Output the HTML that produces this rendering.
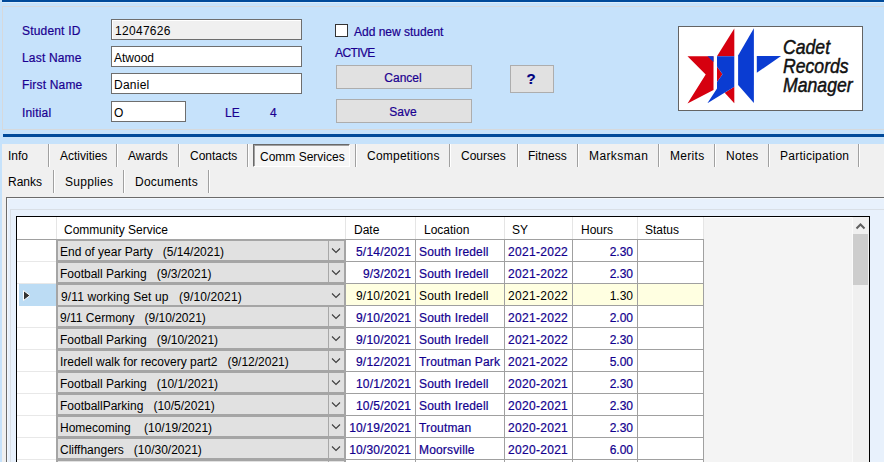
<!DOCTYPE html>
<html><head><meta charset="utf-8"><style>
html,body{margin:0;padding:0;}
body{width:884px;height:462px;overflow:hidden;position:relative;background:#c6e2fb;font-family:"Liberation Sans",sans-serif;}
body>div{position:absolute;}
.t{font-size:12px;line-height:14px;white-space:pre;}
.b{-webkit-text-stroke:0.2px;}
.logo{font-family:"Liberation Sans",sans-serif;font-style:italic;font-size:21px;line-height:21px;color:#111;transform-origin:0 0;transform:scaleX(0.84);-webkit-text-stroke:0.5px #111;white-space:pre;}
</style></head><body>
<div style="left:2px;top:0px;width:882px;height:2px;background:#004a9a;"></div>
<div style="left:2px;top:2px;width:882px;height:1px;background:#dcedfc;"></div>
<div style="left:2px;top:6px;width:900px;height:124px;background:transparent;border:1px solid #d6d9dc;box-sizing:border-box;"></div>
<div style="left:3px;top:134px;width:881px;height:3px;background:#004a9a;"></div>
<div class="t b" style="left:22px;top:24px;color:#1a0090;letter-spacing:0.18px">Student ID</div>
<div class="t b" style="left:22px;top:51px;color:#1a0090;letter-spacing:0.18px">Last Name</div>
<div class="t b" style="left:22px;top:78px;color:#1a0090;letter-spacing:0.18px">First Name</div>
<div class="t b" style="left:22px;top:106px;color:#1a0090;letter-spacing:0.18px">Initial</div>
<div class="t b" style="left:225px;top:106px;color:#1a0090;">LE</div>
<div class="t b" style="left:270px;top:106px;color:#1a0090;">4</div>
<div style="left:111px;top:19px;width:191px;height:21px;background:#f0f0f0;border:1px solid #6e6e6e;box-sizing:border-box;box-shadow:inset 1px 1px 0 #fff"></div>
<div class="t" style="left:115px;top:24px;color:#000;letter-spacing:0.3px">12047626</div>
<div style="left:111px;top:46px;width:191px;height:21px;background:#fff;border:1px solid #6e6e6e;box-sizing:border-box;box-shadow:inset 1px 1px 0 #fff"></div>
<div class="t" style="left:114px;top:51px;color:#000;letter-spacing:0px">Atwood</div>
<div style="left:111px;top:73px;width:191px;height:21px;background:#fff;border:1px solid #6e6e6e;box-sizing:border-box;box-shadow:inset 1px 1px 0 #fff"></div>
<div class="t" style="left:114px;top:78px;color:#000;letter-spacing:0.25px">Daniel</div>
<div style="left:111px;top:101px;width:75px;height:21px;background:#fff;border:1px solid #6e6e6e;box-sizing:border-box;box-shadow:inset 1px 1px 0 #fff"></div>
<div class="t" style="left:114px;top:106px;color:#000;letter-spacing:0px">O</div>
<div style="left:335px;top:24px;width:13px;height:13px;background:#fff;border:1px solid #333;box-sizing:border-box;"></div>
<div class="t b" style="left:354px;top:25px;color:#1a0090;">Add new student</div>
<div class="t b" style="left:335px;top:46px;color:#1a0090;letter-spacing:-0.6px">ACTIVE</div>
<div style="left:336px;top:65px;width:136px;height:24px;background:#e1e1e1;border:1px solid #adadad;box-sizing:border-box;"></div>
<div class="t b" style="left:335px;width:136px;text-align:center;top:71px;color:#1a0090;">Cancel</div>
<div style="left:336px;top:99px;width:136px;height:24px;background:#e1e1e1;border:1px solid #adadad;box-sizing:border-box;"></div>
<div class="t b" style="left:335px;width:136px;text-align:center;top:105px;color:#1a0090;">Save</div>
<div style="left:510px;top:65px;width:44px;height:28px;background:#e1e1e1;border:1px solid #adadad;box-sizing:border-box;"></div>
<div class="t b" style="left:509px;width:44px;text-align:center;top:73px;color:#1a0090;font-weight:bold;font-size:15px;color:#000080;line-height:14px;left:509px;margin-top:-1px">?</div>
<div style="left:678px;top:26px;width:185px;height:85px;background:#fff;border:1px solid #646464;box-sizing:border-box;"></div>
<svg style="position:absolute;left:0;top:0" width="884" height="140" viewBox="0 0 884 140">
<g fill="#d6000f">
<polygon points="687.5,56.3 713.5,56.3 713.5,90 687.5,103.5 705.7,74.6"/>
<polygon points="717,56.3 734.3,28.6 734.3,56.3"/>
<polygon points="717,66.5 722.5,74.3 717,82"/>
<polygon points="724.7,92.8 734.3,86.7 734.3,103.2"/>
</g>
<g fill="#0a3cd2">
<polygon points="707.5,56.3 713.5,56.3 713.5,62"/>
<polygon points="717,56.3 734.3,56.3 734.3,86.7 707.4,103.2 717,88.5 717,82 722.5,74.3 717,66.5"/>
<polygon points="753.9,28.3 753.9,103 738.1,85 738.1,55.6"/>
<polygon points="756.8,56.1 781.1,56.1 756.8,72.7"/>
</g>
</svg>
<div class="logo" style="left:783px;top:36px">Cadet</div>
<div class="logo" style="left:783px;top:55px">Records</div>
<div class="logo" style="left:783px;top:74px">Manager</div>
<div style="left:2px;top:144px;width:882px;height:318px;background:#f0f0f0;"></div>
<div style="left:48px;top:144px;width:1px;height:23px;background:#a0a0a0;"></div>
<div style="left:49px;top:144px;width:1px;height:23px;background:#ffffff;"></div>
<div style="left:116px;top:144px;width:1px;height:23px;background:#a0a0a0;"></div>
<div style="left:117px;top:144px;width:1px;height:23px;background:#ffffff;"></div>
<div style="left:178px;top:144px;width:1px;height:23px;background:#a0a0a0;"></div>
<div style="left:179px;top:144px;width:1px;height:23px;background:#ffffff;"></div>
<div style="left:247px;top:144px;width:1px;height:23px;background:#a0a0a0;"></div>
<div style="left:248px;top:144px;width:1px;height:23px;background:#ffffff;"></div>
<div style="left:355px;top:144px;width:1px;height:23px;background:#a0a0a0;"></div>
<div style="left:356px;top:144px;width:1px;height:23px;background:#ffffff;"></div>
<div style="left:449px;top:144px;width:1px;height:23px;background:#a0a0a0;"></div>
<div style="left:450px;top:144px;width:1px;height:23px;background:#ffffff;"></div>
<div style="left:517px;top:144px;width:1px;height:23px;background:#a0a0a0;"></div>
<div style="left:518px;top:144px;width:1px;height:23px;background:#ffffff;"></div>
<div style="left:577px;top:144px;width:1px;height:23px;background:#a0a0a0;"></div>
<div style="left:578px;top:144px;width:1px;height:23px;background:#ffffff;"></div>
<div style="left:658px;top:144px;width:1px;height:23px;background:#a0a0a0;"></div>
<div style="left:659px;top:144px;width:1px;height:23px;background:#ffffff;"></div>
<div style="left:714px;top:144px;width:1px;height:23px;background:#a0a0a0;"></div>
<div style="left:715px;top:144px;width:1px;height:23px;background:#ffffff;"></div>
<div style="left:768px;top:144px;width:1px;height:23px;background:#a0a0a0;"></div>
<div style="left:769px;top:144px;width:1px;height:23px;background:#ffffff;"></div>
<div style="left:858px;top:144px;width:1px;height:23px;background:#a0a0a0;"></div>
<div style="left:859px;top:144px;width:1px;height:23px;background:#ffffff;"></div>
<div style="left:53px;top:170px;width:1px;height:23px;background:#a0a0a0;"></div>
<div style="left:54px;top:170px;width:1px;height:23px;background:#ffffff;"></div>
<div style="left:123px;top:170px;width:1px;height:23px;background:#a0a0a0;"></div>
<div style="left:124px;top:170px;width:1px;height:23px;background:#ffffff;"></div>
<div style="left:208px;top:170px;width:1px;height:23px;background:#a0a0a0;"></div>
<div style="left:209px;top:170px;width:1px;height:23px;background:#ffffff;"></div>
<div style="left:253px;top:144px;width:97px;height:23px;background:#f6f6f6;border:1px solid;border-color:#696969 #fff #fff #696969;box-sizing:border-box;box-shadow:inset 1px 1px 0 #a0a0a0"></div>
<div class="t" style="left:8px;top:149px;color:#000;letter-spacing:0px">Info</div>
<div class="t" style="left:60px;top:149px;color:#000;letter-spacing:0px">Activities</div>
<div class="t" style="left:128px;top:149px;color:#000;letter-spacing:0px">Awards</div>
<div class="t" style="left:190px;top:149px;color:#000;letter-spacing:0px">Contacts</div>
<div class="t" style="left:367px;top:149px;color:#000;letter-spacing:0.22px">Competitions</div>
<div class="t" style="left:461px;top:149px;color:#000;letter-spacing:0px">Courses</div>
<div class="t" style="left:528px;top:149px;color:#000;letter-spacing:0px">Fitness</div>
<div class="t" style="left:589px;top:149px;color:#000;letter-spacing:0.4px">Marksman</div>
<div class="t" style="left:670px;top:149px;color:#000;letter-spacing:0.3px">Merits</div>
<div class="t" style="left:726px;top:149px;color:#000;letter-spacing:0.25px">Notes</div>
<div class="t" style="left:780px;top:149px;color:#000;letter-spacing:0.25px">Participation</div>
<div class="t" style="left:260px;top:150px;color:#000;">Comm Services</div>
<div class="t" style="left:8px;top:175px;color:#000;letter-spacing:0px">Ranks</div>
<div class="t" style="left:65px;top:175px;color:#000;letter-spacing:0.28px">Supplies</div>
<div class="t" style="left:135px;top:175px;color:#000;letter-spacing:0.25px">Documents</div>
<div style="left:6px;top:197px;width:878px;height:265px;background:#e8f1fc;border-left:1px solid #6b6b6b;border-top:1px solid #6b6b6b;box-sizing:border-box;box-shadow:inset 1px 1px 0 #f4f8fd"></div>
<div style="left:10px;top:209px;width:874px;height:253px;background:transparent;border-left:1px solid #d9dfe6;border-top:1px solid #d9dfe6;box-sizing:border-box;"></div>
<div style="left:16px;top:216px;width:854px;height:246px;background:#f4f4f4;border:1px solid #000;border-bottom:none;box-sizing:border-box;"></div>
<div style="left:17px;top:217px;width:835px;height:1px;background:#fff;"></div>
<div style="left:17px;top:217px;width:686px;height:23px;background:#fff;"></div>
<div style="left:17px;top:239px;width:687px;height:1px;background:#a0a0a0;"></div>
<div style="left:56px;top:217px;width:1px;height:22px;background:#e5e5e5;"></div>
<div style="left:345px;top:217px;width:1px;height:22px;background:#e5e5e5;"></div>
<div style="left:415px;top:217px;width:1px;height:22px;background:#e5e5e5;"></div>
<div style="left:504px;top:217px;width:1px;height:22px;background:#e5e5e5;"></div>
<div style="left:572px;top:217px;width:1px;height:22px;background:#e5e5e5;"></div>
<div style="left:637px;top:217px;width:1px;height:22px;background:#e5e5e5;"></div>
<div style="left:703px;top:217px;width:1px;height:22px;background:#e5e5e5;"></div>
<div class="t" style="left:64px;top:223px;color:#000;">Community Service</div>
<div class="t" style="left:354px;top:223px;color:#000;">Date</div>
<div class="t" style="left:424px;top:223px;color:#000;">Location</div>
<div class="t" style="left:512px;top:223px;color:#000;">SY</div>
<div class="t" style="left:581px;top:223px;color:#000;">Hours</div>
<div class="t" style="left:645px;top:223px;color:#000;">Status</div>
<div style="left:17px;top:240px;width:39px;height:222px;background:#fff;"></div>
<div style="left:56px;top:239px;width:290px;height:223px;background:#a5a5a5;"></div>
<div style="left:346px;top:240px;width:358px;height:222px;background:#fff;"></div>
<div style="left:17px;top:261px;width:39px;height:1px;background:#e8e8e8;"></div>
<div style="left:58px;top:241px;width:286px;height:19px;background:#e1e1e1;"></div>
<div style="left:328px;top:241px;width:1px;height:19px;background:#a8a8a8;"></div>
<svg style="position:absolute;left:331px;top:248px" width="10" height="6" viewBox="0 0 10 6"><polyline points="1,0.5 5,4.5 9,0.5" fill="none" stroke="#3c3c3c" stroke-width="1.1"/></svg>
<div style="left:346px;top:261px;width:358px;height:1px;background:#a0a0a0;"></div>
<div class="t" style="left:60px;top:245px;color:#000;">End of year Party   (5/14/2021)</div>
<div class="t b" style="right:473px;top:245px;color:#12008e;letter-spacing:0.2px;margin-right:-0.2px">5/14/2021</div>
<div class="t b" style="left:419px;top:245px;color:#12008e;letter-spacing:0.17px">South Iredell</div>
<div class="t b" style="left:508px;top:245px;color:#12008e;letter-spacing:0.3px">2021-2022</div>
<div class="t b" style="right:251px;top:245px;color:#12008e;">2.30</div>
<div style="left:17px;top:283px;width:39px;height:1px;background:#e8e8e8;"></div>
<div style="left:58px;top:263px;width:286px;height:19px;background:#e1e1e1;"></div>
<div style="left:328px;top:263px;width:1px;height:19px;background:#a8a8a8;"></div>
<svg style="position:absolute;left:331px;top:270px" width="10" height="6" viewBox="0 0 10 6"><polyline points="1,0.5 5,4.5 9,0.5" fill="none" stroke="#3c3c3c" stroke-width="1.1"/></svg>
<div style="left:346px;top:283px;width:358px;height:1px;background:#a0a0a0;"></div>
<div class="t" style="left:60px;top:267px;color:#000;">Football Parking   (9/3/2021)</div>
<div class="t b" style="right:473px;top:267px;color:#12008e;letter-spacing:0.2px;margin-right:-0.2px">9/3/2021</div>
<div class="t b" style="left:419px;top:267px;color:#12008e;letter-spacing:0.17px">South Iredell</div>
<div class="t b" style="left:508px;top:267px;color:#12008e;letter-spacing:0.3px">2021-2022</div>
<div class="t b" style="right:251px;top:267px;color:#12008e;">2.30</div>
<div style="left:19px;top:284px;width:37px;height:22px;background:#bcdcf4;"></div>
<svg style="position:absolute;left:22px;top:290px" width="10" height="12" viewBox="0 0 10 12"><polygon points="1.5,0.5 8,5.5 1.5,10.5" fill="#333" stroke="#fff" stroke-width="1"/></svg>
<div style="left:346px;top:284px;width:357px;height:21px;background:#ffffe1;"></div>
<div style="left:58px;top:285px;width:286px;height:20px;background:#e1e1e1;"></div>
<svg style="position:absolute;left:331px;top:293px" width="10" height="6" viewBox="0 0 10 6"><polyline points="1,0.5 5,4.5 9,0.5" fill="none" stroke="#3c3c3c" stroke-width="1.1"/></svg>
<div style="left:346px;top:305px;width:358px;height:1px;background:#a0a0a0;"></div>
<div class="t" style="left:61px;top:290px;color:#000;letter-spacing:0.13px">9/11 working Set up   (9/10/2021)</div>
<div class="t" style="right:473px;top:289px;color:#000;letter-spacing:0.2px;margin-right:-0.2px">9/10/2021</div>
<div class="t" style="left:419px;top:289px;color:#000;letter-spacing:0.17px">South Iredell</div>
<div class="t" style="left:508px;top:289px;color:#000;letter-spacing:0.3px">2021-2022</div>
<div class="t" style="right:251px;top:289px;color:#000;">1.30</div>
<div style="left:17px;top:327px;width:39px;height:1px;background:#e8e8e8;"></div>
<div style="left:58px;top:307px;width:286px;height:19px;background:#e1e1e1;"></div>
<div style="left:328px;top:307px;width:1px;height:19px;background:#a8a8a8;"></div>
<svg style="position:absolute;left:331px;top:314px" width="10" height="6" viewBox="0 0 10 6"><polyline points="1,0.5 5,4.5 9,0.5" fill="none" stroke="#3c3c3c" stroke-width="1.1"/></svg>
<div style="left:346px;top:327px;width:358px;height:1px;background:#a0a0a0;"></div>
<div class="t" style="left:60px;top:311px;color:#000;">9/11 Cermony   (9/10/2021)</div>
<div class="t b" style="right:473px;top:311px;color:#12008e;letter-spacing:0.2px;margin-right:-0.2px">9/10/2021</div>
<div class="t b" style="left:419px;top:311px;color:#12008e;letter-spacing:0.17px">South Iredell</div>
<div class="t b" style="left:508px;top:311px;color:#12008e;letter-spacing:0.3px">2021-2022</div>
<div class="t b" style="right:251px;top:311px;color:#12008e;">2.00</div>
<div style="left:17px;top:349px;width:39px;height:1px;background:#e8e8e8;"></div>
<div style="left:58px;top:329px;width:286px;height:19px;background:#e1e1e1;"></div>
<div style="left:328px;top:329px;width:1px;height:19px;background:#a8a8a8;"></div>
<svg style="position:absolute;left:331px;top:336px" width="10" height="6" viewBox="0 0 10 6"><polyline points="1,0.5 5,4.5 9,0.5" fill="none" stroke="#3c3c3c" stroke-width="1.1"/></svg>
<div style="left:346px;top:349px;width:358px;height:1px;background:#a0a0a0;"></div>
<div class="t" style="left:60px;top:333px;color:#000;">Football Parking   (9/10/2021)</div>
<div class="t b" style="right:473px;top:333px;color:#12008e;letter-spacing:0.2px;margin-right:-0.2px">9/10/2021</div>
<div class="t b" style="left:419px;top:333px;color:#12008e;letter-spacing:0.17px">South Iredell</div>
<div class="t b" style="left:508px;top:333px;color:#12008e;letter-spacing:0.3px">2021-2022</div>
<div class="t b" style="right:251px;top:333px;color:#12008e;">2.30</div>
<div style="left:17px;top:371px;width:39px;height:1px;background:#e8e8e8;"></div>
<div style="left:58px;top:351px;width:286px;height:19px;background:#e1e1e1;"></div>
<div style="left:328px;top:351px;width:1px;height:19px;background:#a8a8a8;"></div>
<svg style="position:absolute;left:331px;top:358px" width="10" height="6" viewBox="0 0 10 6"><polyline points="1,0.5 5,4.5 9,0.5" fill="none" stroke="#3c3c3c" stroke-width="1.1"/></svg>
<div style="left:346px;top:371px;width:358px;height:1px;background:#a0a0a0;"></div>
<div class="t" style="left:60px;top:355px;color:#000;">Iredell walk for recovery part2   (9/12/2021)</div>
<div class="t b" style="right:473px;top:355px;color:#12008e;letter-spacing:0.2px;margin-right:-0.2px">9/12/2021</div>
<div class="t b" style="left:419px;top:355px;color:#12008e;letter-spacing:0.17px">Troutman Park</div>
<div class="t b" style="left:508px;top:355px;color:#12008e;letter-spacing:0.3px">2021-2022</div>
<div class="t b" style="right:251px;top:355px;color:#12008e;">5.00</div>
<div style="left:17px;top:393px;width:39px;height:1px;background:#e8e8e8;"></div>
<div style="left:58px;top:373px;width:286px;height:19px;background:#e1e1e1;"></div>
<div style="left:328px;top:373px;width:1px;height:19px;background:#a8a8a8;"></div>
<svg style="position:absolute;left:331px;top:380px" width="10" height="6" viewBox="0 0 10 6"><polyline points="1,0.5 5,4.5 9,0.5" fill="none" stroke="#3c3c3c" stroke-width="1.1"/></svg>
<div style="left:346px;top:393px;width:358px;height:1px;background:#a0a0a0;"></div>
<div class="t" style="left:60px;top:377px;color:#000;">Football Parking   (10/1/2021)</div>
<div class="t b" style="right:473px;top:377px;color:#12008e;letter-spacing:0.2px;margin-right:-0.2px">10/1/2021</div>
<div class="t b" style="left:419px;top:377px;color:#12008e;letter-spacing:0.17px">South Iredell</div>
<div class="t b" style="left:508px;top:377px;color:#12008e;letter-spacing:0.3px">2020-2021</div>
<div class="t b" style="right:251px;top:377px;color:#12008e;">2.30</div>
<div style="left:17px;top:415px;width:39px;height:1px;background:#e8e8e8;"></div>
<div style="left:58px;top:395px;width:286px;height:19px;background:#e1e1e1;"></div>
<div style="left:328px;top:395px;width:1px;height:19px;background:#a8a8a8;"></div>
<svg style="position:absolute;left:331px;top:402px" width="10" height="6" viewBox="0 0 10 6"><polyline points="1,0.5 5,4.5 9,0.5" fill="none" stroke="#3c3c3c" stroke-width="1.1"/></svg>
<div style="left:346px;top:415px;width:358px;height:1px;background:#a0a0a0;"></div>
<div class="t" style="left:60px;top:399px;color:#000;">FootballParking   (10/5/2021)</div>
<div class="t b" style="right:473px;top:399px;color:#12008e;letter-spacing:0.2px;margin-right:-0.2px">10/5/2021</div>
<div class="t b" style="left:419px;top:399px;color:#12008e;letter-spacing:0.17px">South Iredell</div>
<div class="t b" style="left:508px;top:399px;color:#12008e;letter-spacing:0.3px">2020-2021</div>
<div class="t b" style="right:251px;top:399px;color:#12008e;">2.30</div>
<div style="left:17px;top:437px;width:39px;height:1px;background:#e8e8e8;"></div>
<div style="left:58px;top:417px;width:286px;height:19px;background:#e1e1e1;"></div>
<div style="left:328px;top:417px;width:1px;height:19px;background:#a8a8a8;"></div>
<svg style="position:absolute;left:331px;top:424px" width="10" height="6" viewBox="0 0 10 6"><polyline points="1,0.5 5,4.5 9,0.5" fill="none" stroke="#3c3c3c" stroke-width="1.1"/></svg>
<div style="left:346px;top:437px;width:358px;height:1px;background:#a0a0a0;"></div>
<div class="t" style="left:60px;top:421px;color:#000;">Homecoming    (10/19/2021)</div>
<div class="t b" style="right:473px;top:421px;color:#12008e;letter-spacing:0.2px;margin-right:-0.2px">10/19/2021</div>
<div class="t b" style="left:419px;top:421px;color:#12008e;letter-spacing:0.17px">Troutman</div>
<div class="t b" style="left:508px;top:421px;color:#12008e;letter-spacing:0.3px">2020-2021</div>
<div class="t b" style="right:251px;top:421px;color:#12008e;">2.30</div>
<div style="left:17px;top:459px;width:39px;height:1px;background:#e8e8e8;"></div>
<div style="left:58px;top:439px;width:286px;height:19px;background:#e1e1e1;"></div>
<div style="left:328px;top:439px;width:1px;height:19px;background:#a8a8a8;"></div>
<svg style="position:absolute;left:331px;top:446px" width="10" height="6" viewBox="0 0 10 6"><polyline points="1,0.5 5,4.5 9,0.5" fill="none" stroke="#3c3c3c" stroke-width="1.1"/></svg>
<div style="left:346px;top:459px;width:358px;height:1px;background:#a0a0a0;"></div>
<div class="t" style="left:60px;top:443px;color:#000;">Cliffhangers   (10/30/2021)</div>
<div class="t b" style="right:473px;top:443px;color:#12008e;letter-spacing:0.2px;margin-right:-0.2px">10/30/2021</div>
<div class="t b" style="left:419px;top:443px;color:#12008e;letter-spacing:0.17px">Moorsville</div>
<div class="t b" style="left:508px;top:443px;color:#12008e;letter-spacing:0.3px">2020-2021</div>
<div class="t b" style="right:251px;top:443px;color:#12008e;">6.00</div>
<div style="left:17px;top:481px;width:39px;height:1px;background:#e8e8e8;"></div>
<div style="left:58px;top:461px;width:286px;height:19px;background:#e1e1e1;"></div>
<div style="left:328px;top:461px;width:1px;height:19px;background:#a8a8a8;"></div>
<svg style="position:absolute;left:331px;top:468px" width="10" height="6" viewBox="0 0 10 6"><polyline points="1,0.5 5,4.5 9,0.5" fill="none" stroke="#3c3c3c" stroke-width="1.1"/></svg>
<div style="left:346px;top:481px;width:358px;height:1px;background:#a0a0a0;"></div>
<div style="left:415px;top:240px;width:1px;height:222px;background:#a0a0a0;"></div>
<div style="left:504px;top:240px;width:1px;height:222px;background:#a0a0a0;"></div>
<div style="left:572px;top:240px;width:1px;height:222px;background:#a0a0a0;"></div>
<div style="left:637px;top:240px;width:1px;height:222px;background:#a0a0a0;"></div>
<div style="left:703px;top:240px;width:1px;height:222px;background:#a0a0a0;"></div>
<div style="left:852px;top:217px;width:1px;height:245px;background:#fafafa;"></div>
<div style="left:853px;top:217px;width:16px;height:245px;background:#f0f0f0;"></div>
<div style="left:853px;top:234px;width:15px;height:51px;background:#cdcdcd;"></div>
<svg style="position:absolute;left:852px;top:218px" width="17" height="17" viewBox="0 0 17 17"><polyline points="4.5,10.5 8.5,6.5 12.5,10.5" fill="none" stroke="#606060" stroke-width="2"/></svg>
</body></html>
